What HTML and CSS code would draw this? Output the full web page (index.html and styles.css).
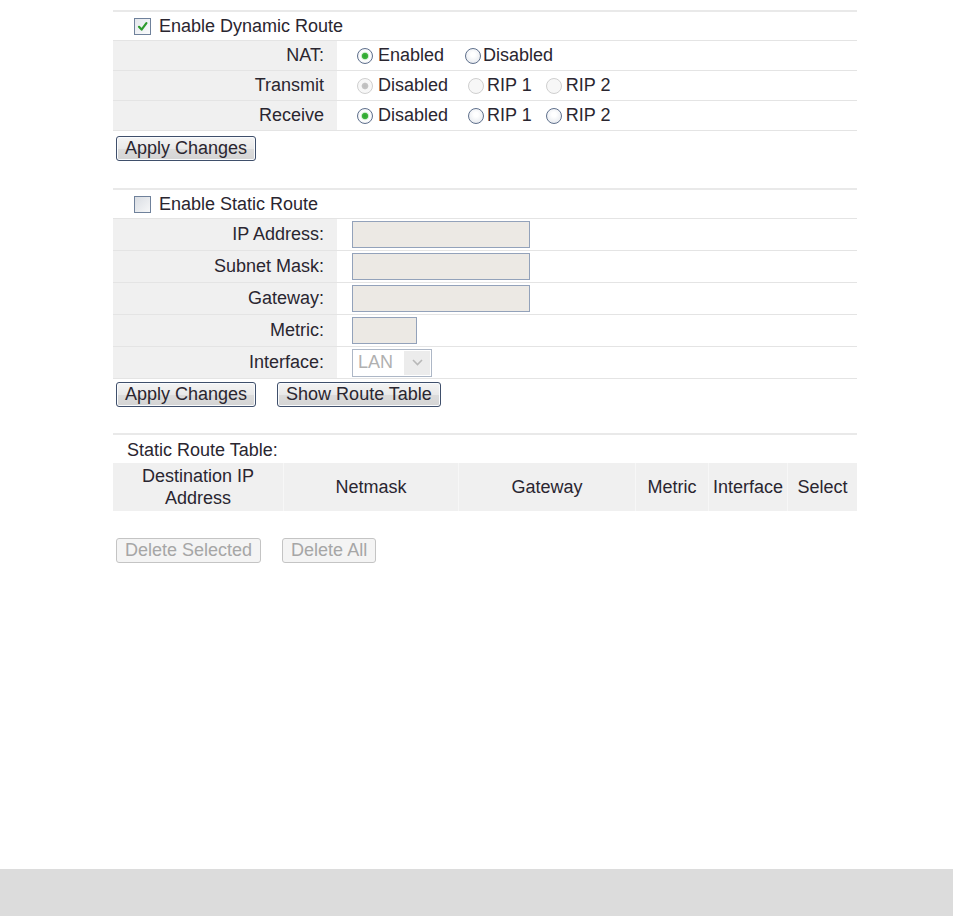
FILE: index.html
```html
<!DOCTYPE html>
<html lang="en">
  <head>
    <meta charset="UTF-8" />
    <meta name="viewport" content="width=device-width, initial-scale=1.0" />
    <title>Routing Configuration</title>
    <link rel="stylesheet" href="styles.css">
  </head>
  <body>
    <div class="page">
      <!-- dynamic route -->
      <div class="section">
        <div class="row checkRow">
          <span class="check">
            <svg width="17" height="17" viewBox="0 0 17 17">
              <path d="M5 8.8 L7.6 11.6 L12.4 5.2" fill="none" stroke="#2d9b2d" stroke-width="2.2" stroke-linecap="round" stroke-linejoin="round" />
            </svg>
          </span>
          Enable Dynamic Route
        </div>
        <div class="row">
          <div class="label">NAT:</div>
          <div class="value">
            <span class="radio on"></span><span>Enabled</span>
            <span class="radio sp1"></span><span>Disabled</span>
          </div>
        </div>
        <div class="row">
          <div class="label">Transmit</div>
          <div class="value">
            <span class="radio dis on"></span><span>Disabled</span>
            <span class="radio dis sp2"></span><span>RIP 1</span>
            <span class="radio dis sp3"></span><span>RIP 2</span>
          </div>
        </div>
        <div class="row">
          <div class="label">Receive</div>
          <div class="value">
            <span class="radio on"></span><span>Disabled</span>
            <span class="radio sp2"></span><span>RIP 1</span>
            <span class="radio sp3"></span><span>RIP 2</span>
          </div>
        </div>
      </div>
      <div class="buttons first">
        <button class="btn">Apply Changes</button>
      </div>

      <!-- static route -->
      <div class="section">
        <div class="row checkRow">
          <span class="check off"></span>
          Enable Static Route
        </div>
        <div class="row tall">
          <div class="label">IP Address:</div>
          <div class="value"><input class="field" type="text" disabled></div>
        </div>
        <div class="row tall">
          <div class="label">Subnet Mask:</div>
          <div class="value"><input class="field" type="text" disabled></div>
        </div>
        <div class="row tall">
          <div class="label">Gateway:</div>
          <div class="value"><input class="field" type="text" disabled></div>
        </div>
        <div class="row tall">
          <div class="label">Metric:</div>
          <div class="value"><input class="field small" type="text" disabled></div>
        </div>
        <div class="row tall">
          <div class="label">Interface:</div>
          <div class="value">
            <div class="select">
              <span class="selText">LAN</span>
              <span class="selArrow">
                <svg width="11" height="7" viewBox="0 0 11 7">
                  <path d="M1 1 L5.5 5.5 L10 1" fill="none" stroke="#b8b8b8" stroke-width="1.6" />
                </svg>
              </span>
            </div>
          </div>
        </div>
      </div>
      <div class="buttons second">
        <button class="btn">Apply Changes</button>
        <button class="btn">Show Route Table</button>
      </div>

      <!-- route table -->
      <div class="section">
        <div class="tableTitle">Static Route Table:</div>
        <table class="routes">
          <tr>
            <th class="c1">Destination IP<br>Address</th>
            <th class="c2">Netmask</th>
            <th class="c3">Gateway</th>
            <th class="c4">Metric</th>
            <th class="c5">Interface</th>
            <th class="c6">Select</th>
          </tr>
        </table>
      </div>
      <div class="buttons third">
        <button class="btn off" disabled>Delete Selected</button>
        <button class="btn off" disabled>Delete All</button>
      </div>
    </div>
    <div class="footer"></div>
  </body>
</html>
```

FILE: styles.css
```css
html,
body {
  margin: 0;
  padding: 0;
}
body {
  font-family: "Liberation Sans", Arial, sans-serif;
  font-size: 18px;
  color: #2a2630;
  min-height: 100vh;
  display: flex;
  flex-direction: column;
  background: #fff;
}
.page {
  flex: 1;
  width: 744px;
  margin-left: 113px;
  padding-top: 10px;
}
.footer {
  height: 47px;
  background: #dcdcdc;
}

/* 섹션 윗줄 */
.section {
  border-top: 2px solid #e9e9e9;
}
.row {
  display: flex;
  align-items: stretch;
  height: 30px;
  box-sizing: border-box;
  border-bottom: 1px solid #e4e4e4;
}
.row.tall {
  height: 32px;
}
.checkRow {
  align-items: center;
  height: 29px;
  padding-left: 21px;
}
.label {
  width: 224px;
  box-sizing: border-box;
  padding-right: 13px;
  background: #f0f0f0;
  text-align: right;
  display: flex;
  align-items: center;
  justify-content: flex-end;
}
.value {
  flex: 1;
  display: flex;
  align-items: center;
  padding-left: 15px;
}

/* checkbox */
.check {
  display: inline-block;
  width: 15px;
  height: 15px;
  border: 1px solid #6f819b;
  background: linear-gradient(135deg, #e4e7ec, #fafbfc);
  margin-right: 8px;
  position: relative;
}
.check svg {
  position: absolute;
  left: -1px;
  top: -1px;
}
.check.off {
  background: linear-gradient(135deg, #d9dde3, #f6f7f8);
}

/* radio */
.radio {
  display: inline-block;
  width: 16px;
  height: 16px;
  border: 1px solid #5f708c;
  border-radius: 50%;
  box-sizing: border-box;
  background: radial-gradient(circle at 50% 40%, #ffffff 20%, #dfe3ea 100%);
  margin: 0 5px 0 5px;
}
.radio.on {
  background: radial-gradient(circle, #2fa02f 0, #3cb53c 2.8px, #d6eed6 3.6px, #ffffff 4.8px, #dfe3ea 100%);
}
.radio.dis {
  border-color: #cfcfcf;
  background: #f7f7f7;
}
.radio.dis.on {
  background: radial-gradient(circle, #bdbdbd 0, #c4c4c4 2.8px, #f7f7f7 3.8px);
}
.radio.sp1 {
  margin-left: 21px;
  margin-right: 2px;
}
.radio.sp2 {
  margin-left: 20px;
  margin-right: 3px;
}
.radio.sp3 {
  margin-left: 14px;
  margin-right: 4px;
}

/* text field */
.field {
  width: 178px;
  height: 27px;
  box-sizing: border-box;
  border: 1px solid #93a2ba;
  background: #ece9e4;
  margin: 0;
  padding: 0;
}
.field.small {
  width: 65px;
}
.select {
  width: 80px;
  height: 28px;
  box-sizing: border-box;
  border: 1px solid #adb7c6;
  display: flex;
  align-items: center;
  background: #fff;
}
.selText {
  flex: 1;
  color: #b0b0b0;
  padding-left: 5px;
}
.selArrow {
  width: 26px;
  height: 24px;
  margin-right: 1px;
  background: #ececec;
  display: flex;
  align-items: center;
  justify-content: center;
}

/* buttons */
.buttons {
  display: flex;
  gap: 21px;
  padding-left: 3px;
}
.buttons.first {
  padding-top: 5px;
  height: 52px;
}
.buttons.second {
  padding-top: 3px;
  height: 51px;
}
.buttons.third {
  padding-top: 27px;
}
.btn {
  font-family: "Liberation Sans", Arial, sans-serif;
  font-size: 18px;
  color: #2a2630;
  height: 25px;
  padding: 0 8px;
  border: 1px solid #3f4f6b;
  border-radius: 3px;
  background: linear-gradient(#f4f4f4, #e9e9e9 50%, #dcdcdc 51%, #d4d4d4);
  box-shadow: inset 0 0 0 1px #f9fbfd;
  line-height: 21px;
}
.btn.off {
  color: #a6a6a6;
  border-color: #c4c4c4;
  background: #f4f4f4;
  box-shadow: none;
}

/* table */
.tableTitle {
  height: 28px;
  line-height: 30px;
  padding-left: 14px;
}
.routes {
  width: 744px;
  border-collapse: collapse;
}
.routes th {
  height: 48px;
  padding: 0;
  background: #f0f0f0;
  font-weight: normal;
  line-height: 22px;
  text-align: center;
  border-left: 1px solid #f7f7f7;
}
.routes th.c1 {
  width: 170px;
  border-left: none;
}
.routes th.c2 {
  width: 174px;
}
.routes th.c3 {
  width: 176px;
}
.routes th.c4 {
  width: 72px;
}
.routes th.c5 {
  width: 78px;
}
```
